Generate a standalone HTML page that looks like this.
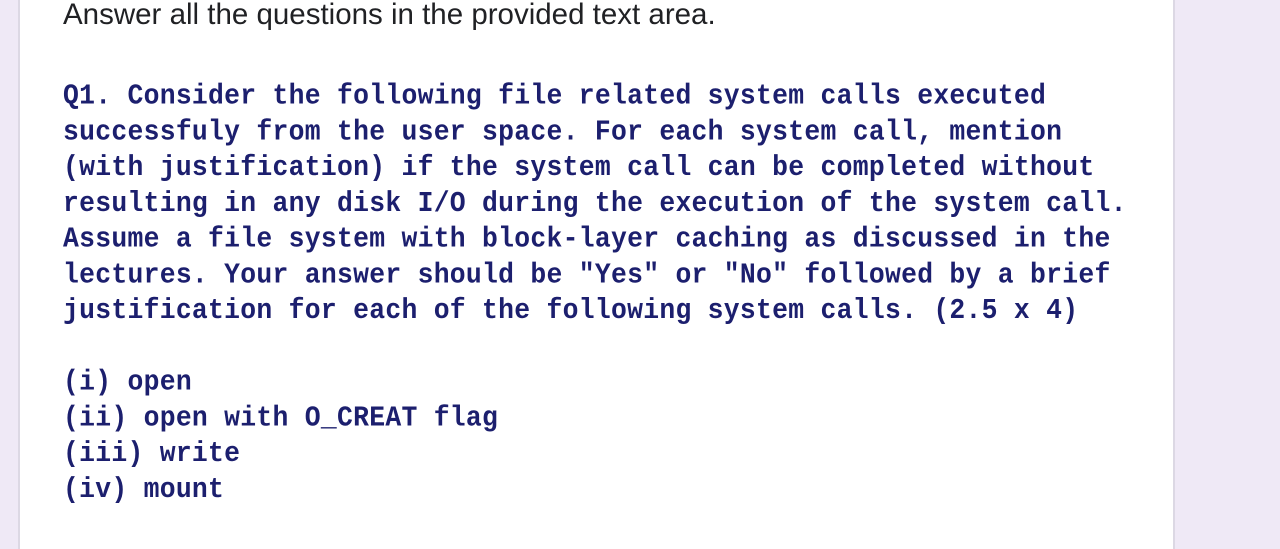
<!DOCTYPE html>
<html><head><style>
body{margin:0;width:1280px;height:549px;background:#efe9f6;position:relative;overflow:hidden}
.card{position:absolute;left:18px;top:0;width:1157px;height:549px;background:#fff;border-left:2px solid #dcd8e4;border-right:2px solid #dcd8e4;box-sizing:border-box}
.t{position:absolute;left:63px;top:-2px;font:29.5px "Liberation Sans",sans-serif;color:#202124;white-space:pre}
pre{position:absolute;left:63px;top:78px;margin:0;font:bold 26.4px/32.55px "Liberation Mono",monospace;letter-spacing:0.28px;color:#1c1f6e;transform:scaleY(1.1);transform-origin:0 0}
</style></head><body>
<div class="card"></div>
<div class="t">Answer all the questions in the provided text area.</div>
<pre>Q1. Consider the following file related system calls executed
successfuly from the user space. For each system call, mention
(with justification) if the system call can be completed without
resulting in any disk I/O during the execution of the system call.
Assume a file system with block-layer caching as discussed in the
lectures. Your answer should be "Yes" or "No" followed by a brief
justification for each of the following system calls. (2.5 x 4)

(i) open
(ii) open with O_CREAT flag
(iii) write
(iv) mount</pre>
</body></html>
